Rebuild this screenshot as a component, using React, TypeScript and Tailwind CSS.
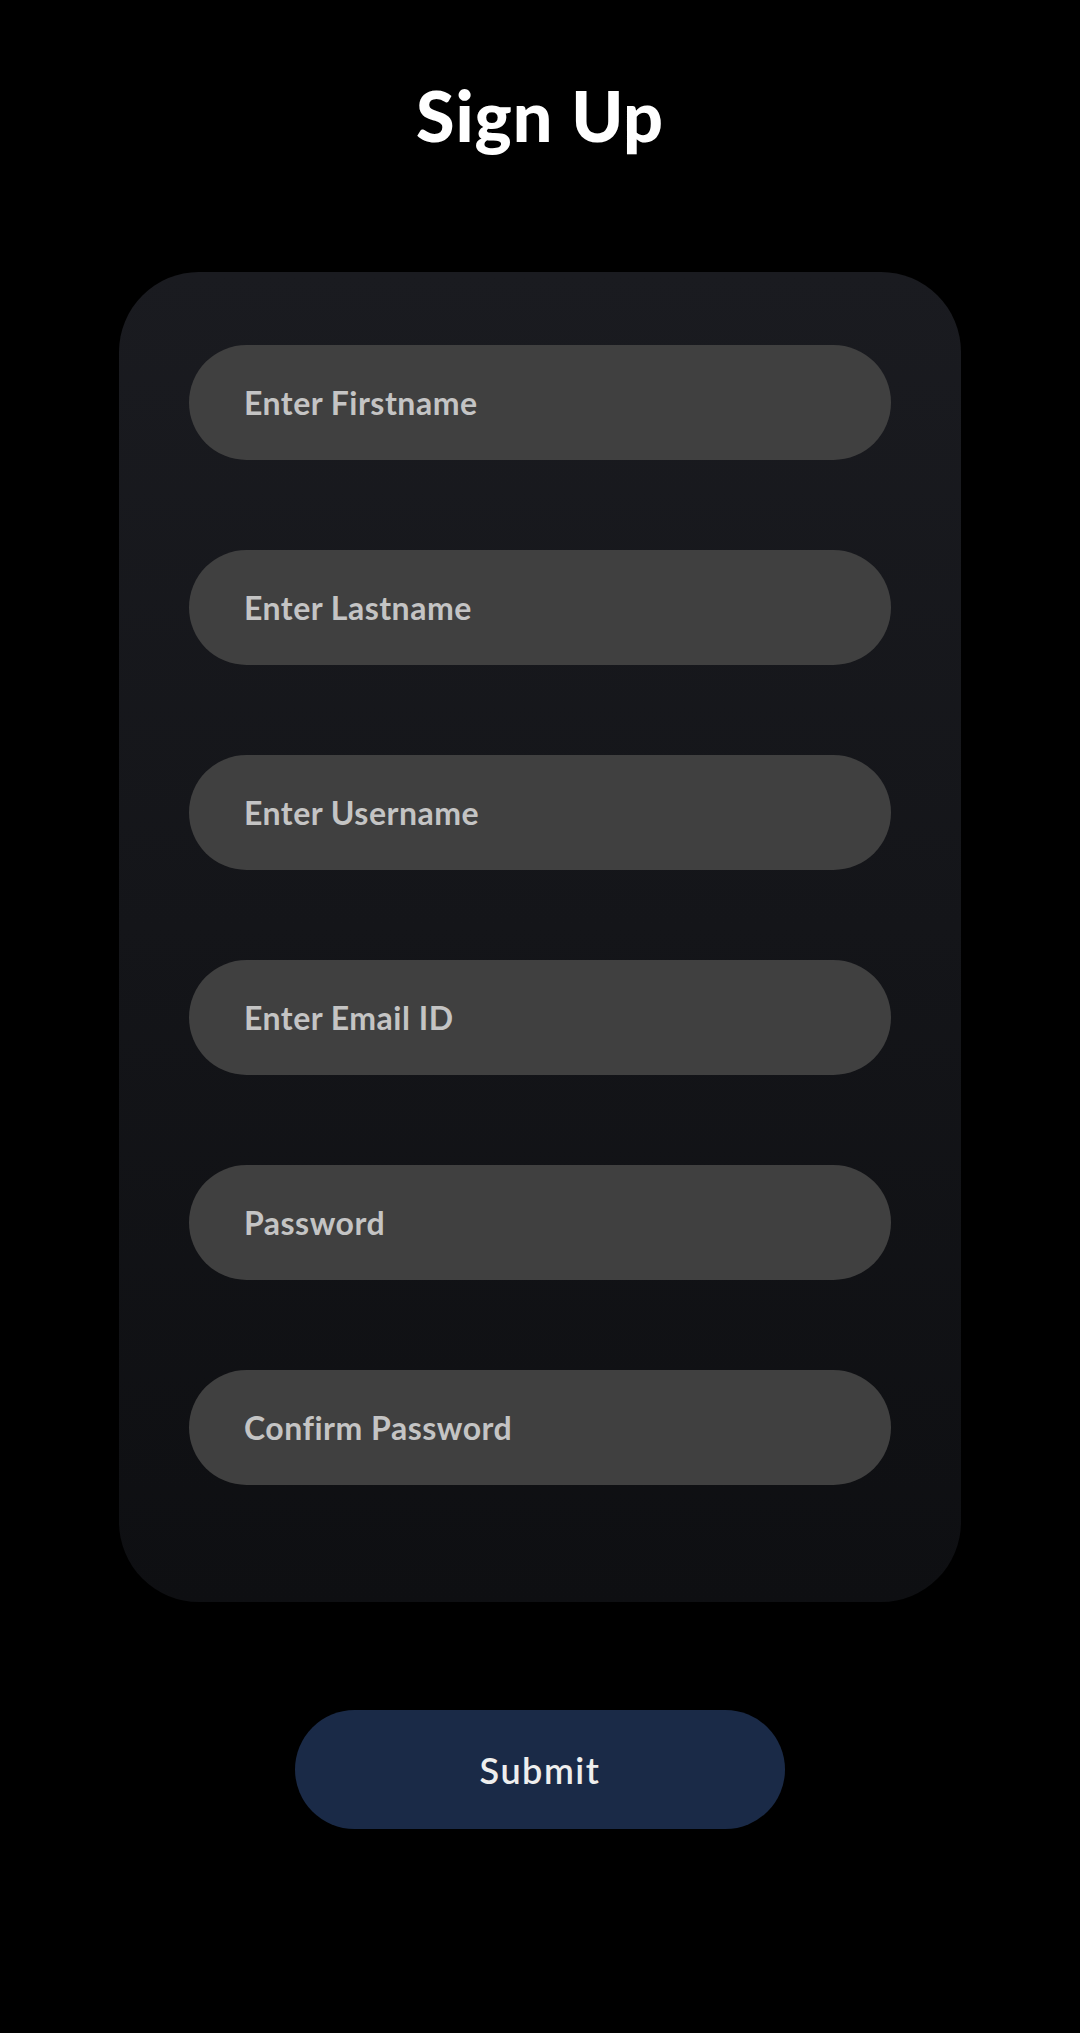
const fields = [
  "Enter Firstname",
  "Enter Lastname",
  "Enter Username",
  "Enter Email ID",
  "Password",
  "Confirm Password",
];

export default function App() {
  return (
    <div className="min-h-[2033px] bg-black flex flex-col items-center font-['Lato',sans-serif]">
      <h1 className="mt-[80px] text-[70px] leading-none font-black text-white tracking-[1px]">
        Sign Up
      </h1>

      {/* form card */}
      <div className="mt-[122px] w-[842px] rounded-[80px] bg-gradient-to-b from-[#1a1b20] to-[#0e0f12] pl-[70px] pr-[70px] pt-[73px] pb-[117px] flex flex-col gap-[90px]">
        {fields.map((f) => (
          <input
            key={f}
            type={f.includes("Password") ? "password" : "text"}
            placeholder={f}
            className="h-[115px] w-full rounded-full bg-[#404040] pl-[55px] pr-8 text-[32px] tracking-[0.5px] font-bold text-[#c4c4c4] placeholder:text-[#c4c4c4] outline-none"
          />
        ))}
      </div>

      <button className="mt-[108px] h-[119px] w-[490px] rounded-full bg-[#1a2a47] text-[36px] tracking-[1.5px] font-semibold text-[#eeeeee]">
        Submit
      </button>
    </div>
  );
}
